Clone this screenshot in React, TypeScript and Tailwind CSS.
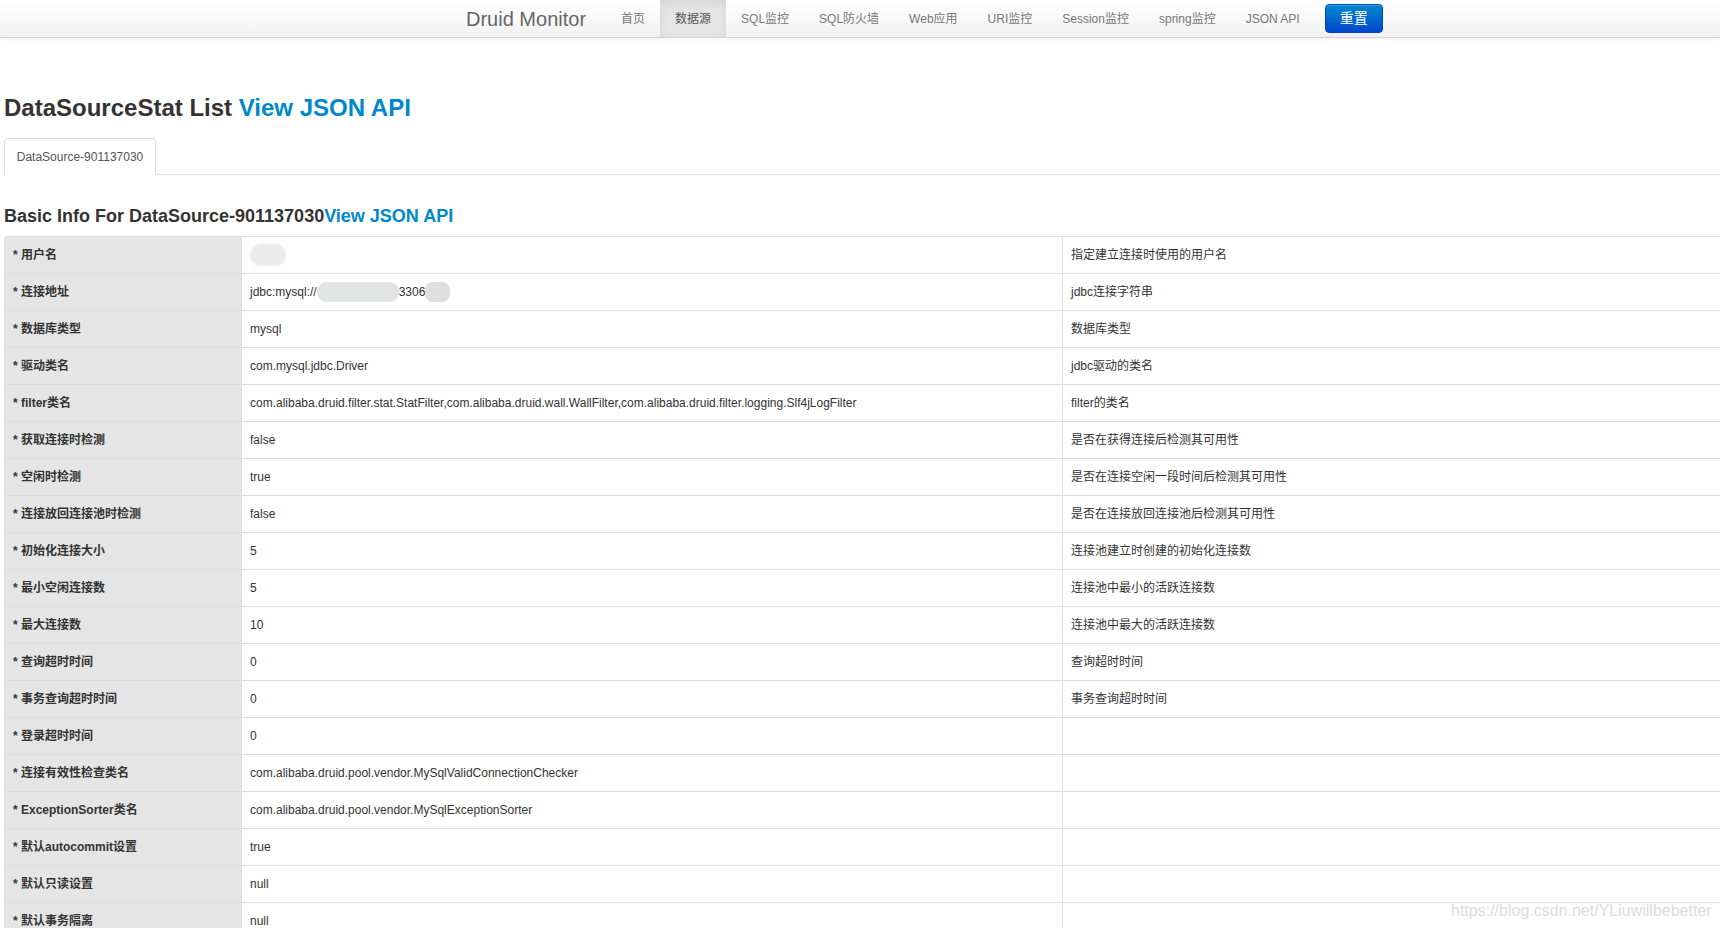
import React from "react";

const rows: { label: string; value: React.ReactNode; desc: string }[] = [
  {
    label: "* 用户名",
    value: <span className="inline-block w-[36px] h-[22px] rounded-full bg-[#ebebeb] blur-[1px]" />,
    desc: "指定建立连接时使用的用户名",
  },
  {
    label: "* 连接地址",
    value: (
      <span className="inline-flex items-center">
        jdbc:mysql://
        <span className="inline-block w-[82px] h-[20px] rounded-[9px] bg-[#e1e3e5] blur-[0.5px]" />
        3306
        <span className="inline-block w-[25px] h-[20px] rounded-[8px] bg-[#dedede] blur-[0.5px]" />
      </span>
    ),
    desc: "jdbc连接字符串",
  },
  { label: "* 数据库类型", value: "mysql", desc: "数据库类型" },
  { label: "* 驱动类名", value: "com.mysql.jdbc.Driver", desc: "jdbc驱动的类名" },
  {
    label: "* filter类名",
    value:
      "com.alibaba.druid.filter.stat.StatFilter,com.alibaba.druid.wall.WallFilter,com.alibaba.druid.filter.logging.Slf4jLogFilter",
    desc: "filter的类名",
  },
  { label: "* 获取连接时检测", value: "false", desc: "是否在获得连接后检测其可用性" },
  { label: "* 空闲时检测", value: "true", desc: "是否在连接空闲一段时间后检测其可用性" },
  { label: "* 连接放回连接池时检测", value: "false", desc: "是否在连接放回连接池后检测其可用性" },
  { label: "* 初始化连接大小", value: "5", desc: "连接池建立时创建的初始化连接数" },
  { label: "* 最小空闲连接数", value: "5", desc: "连接池中最小的活跃连接数" },
  { label: "* 最大连接数", value: "10", desc: "连接池中最大的活跃连接数" },
  { label: "* 查询超时时间", value: "0", desc: "查询超时时间" },
  { label: "* 事务查询超时时间", value: "0", desc: "事务查询超时时间" },
  { label: "* 登录超时时间", value: "0", desc: "" },
  { label: "* 连接有效性检查类名", value: "com.alibaba.druid.pool.vendor.MySqlValidConnectionChecker", desc: "" },
  { label: "* ExceptionSorter类名", value: "com.alibaba.druid.pool.vendor.MySqlExceptionSorter", desc: "" },
  { label: "* 默认autocommit设置", value: "true", desc: "" },
  { label: "* 默认只读设置", value: "null", desc: "" },
  { label: "* 默认事务隔离", value: "null", desc: "" },
];

const navItems = ["首页", "数据源", "SQL监控", "SQL防火墙", "Web应用", "URI监控", "Session监控", "spring监控", "JSON API"];

export default function App() {
  return (
    <div
      className="relative min-h-[928px] overflow-hidden bg-white text-[#333]"
      style={{ fontFamily: '"Liberation Sans", Arial, "Noto Sans CJK SC", sans-serif' }}
    >
      {/* navbar */}
      <div className="h-[38px] border-b border-[#d4d4d4] bg-gradient-to-b from-white to-[#f2f2f2] shadow-[0_1px_4px_rgba(0,0,0,0.065)]">
        <div className="flex h-[37px] items-stretch pl-[466px]">
          <div className="flex items-center mr-[20px] text-[20px] text-[#666]">Druid Monitor</div>
          {navItems.map((n) => (
            <div
              key={n}
              className={
                n === "数据源"
                  ? "flex items-center px-[15px] text-[12px] text-[#555] bg-[#e5e5e5] shadow-[inset_0_3px_8px_rgba(0,0,0,0.08)]"
                  : "flex items-center px-[15px] text-[12px] text-[#777]"
              }
            >
              {n}
            </div>
          ))}
          <div className="flex items-center ml-[10px]">
            <div className="flex items-center justify-center w-[58px] h-[29px] rounded-[4px] border border-[#0044cc] bg-gradient-to-b from-[#0088cc] to-[#0044cc] text-white text-[14px] shadow-[inset_0_1px_0_rgba(255,255,255,0.2)]">
              重置
            </div>
          </div>
        </div>
      </div>

      {/* heading */}
      <div className="mt-[58px] ml-[4px] text-[24px] leading-[24px] font-bold text-[#333]">
        DataSourceStat List <span className="text-[#0088cc]">View JSON API</span>
      </div>

      {/* tabs */}
      <div className="mt-[18px] ml-[4px] flex border-b border-[#ddd]">
        <div className="-mb-[1px] h-[37px] w-[152px] flex items-center justify-center rounded-t-[4px] border border-[#ddd] border-b-white bg-white text-[12px] text-[#555]">
          DataSource-901137030
        </div>
      </div>

      {/* basic info heading */}
      <div className="mt-[32px] ml-[4px] text-[18px] leading-[18px] font-bold text-[#333]">
        Basic Info For DataSource-901137030<span className="text-[#0088cc]">View JSON API</span>
      </div>

      {/* table */}
      <div className="mt-[11px] ml-[4px] border-l border-[#ddd] rounded-tl-[4px] overflow-hidden text-[12px]">
        {rows.map((r, i) => (
          <div key={i} className="flex h-[37px] border-t border-[#ddd]">
            <div className="w-[236px] shrink-0 flex items-center pl-[8px] bg-[#e5e5e5] font-bold text-[#333]">
              {r.label}
            </div>
            <div className="w-[821px] shrink-0 flex items-center pl-[8px] border-l border-[#ddd] text-[#333]">
              {r.value}
            </div>
            <div className="flex-1 flex items-center pl-[8px] border-l border-[#ddd] text-[#333]">{r.desc}</div>
          </div>
        ))}
      </div>

      {/* watermark */}
      <div className="absolute left-[1451px] top-[899px] text-[16px] text-[#dcdcdc] whitespace-nowrap">
        https://blog.csdn.net/YLiuwillbebetter
      </div>
    </div>
  );
}
